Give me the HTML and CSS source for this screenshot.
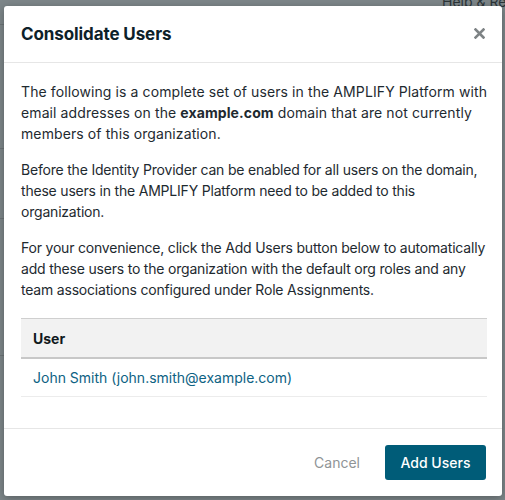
FILE: index.html
```html
<!DOCTYPE html>
<html lang="en">
<head>
<meta charset="utf-8">
<title>Consolidate Users</title>
<link rel="stylesheet" href="styles.css">
</head>
<body>
<div class="page">
  <div class="page-help">Help &amp; Re</div>
  <div class="page-line l1"></div>
  <div class="page-line l2"></div>
  <div class="page-line l3"></div>
  <div class="page-line l4"></div>
</div>
<div class="overlay">
  <div class="modal">
    <div class="modal-header">
      <h2 class="modal-title">Consolidate Users</h2>
      <svg class="close" width="11" height="11" viewBox="0 0 11 11" aria-label="Close"><path d="M1.5 1.5 L9.5 9.5 M9.5 1.5 L1.5 9.5" stroke="#7e8385" stroke-width="2.6" stroke-linecap="square" fill="none"/></svg>
    </div>
    <div class="modal-body">
      <p class="wide">The following is a complete set of users in the AMPLIFY Platform with<br>email addresses on the <strong>example.com</strong> domain that are not currently<br>members of this organization.</p>
      <p class="tight">Before the Identity Provider can be enabled for all users on the domain,<br>these users in the AMPLIFY Platform need to be added to this<br>organization.</p>
      <p class="tight">For your convenience, click the Add Users button below to automatically<br>add these users to the organization with the default org roles and any<br>team associations configured under Role Assignments.</p>
      <table class="users">
        <thead><tr><th>User</th></tr></thead>
        <tbody><tr><td><a href="#">John Smith (john.smith@example.com)</a></td></tr></tbody>
      </table>
    </div>
    <div class="modal-footer">
      <button class="btn-cancel">Cancel</button>
      <button class="btn-primary">Add Users</button>
    </div>
  </div>
</div>
</body>
</html>
```
FILE: styles.css
```css
html, body {
  margin: 0;
  padding: 0;
}
body {
  width: 505px;
  height: 500px;
  overflow: hidden;
  background: #7d8689;
  font-family: Inter, "Noto Sans", sans-serif;
  position: relative;
}
.page {
  position: absolute;
  inset: 0;
  overflow: hidden;
}
.page-help {
  position: absolute;
  left: 442px;
  top: -7px;
  font-size: 14px;
  color: #2c3538;
  white-space: nowrap;
}
.page-line {
  position: absolute;
  left: 0;
  width: 8px;
  height: 1px;
  background: #6c7477;
}
.l1 { top: 24px; }
.l2 { top: 148px; }
.l3 { top: 218px; }
.l4 { top: 355px; }
.overlay {
  position: absolute;
  inset: 0;
  padding: 6px 3px 4px 4px;
  box-sizing: border-box;
}
.modal {
  height: 490px;
  background: #fff;
  border-radius: 3px;
  box-shadow: 0 2px 8px rgba(0,0,0,0.3);
  display: flex;
  flex-direction: column;
}
.modal-header {
  height: 56px;
  border-bottom: 1px solid #e6e6e6;
  display: flex;
  align-items: center;
  justify-content: space-between;
  padding: 0 17px 0 17px;
}
.modal-title {
  margin: 0;
  font-size: 17px;
  font-weight: 700;
  color: #0d2129;
  letter-spacing: -0.1px;
}
.close {
  display: block;
  margin-top: -1px;
}
.modal-body {
  flex: 1;
  padding: 18px 4px 0 17px;
  color: #1e2a30;
  font-size: 14px;
  line-height: 21px;
}
.modal-body p {
  margin: 0 0 15px 0;
  white-space: nowrap;
}
.modal-body p.wide {
  letter-spacing: 0.1px;
}
.modal-body p.tight {
  letter-spacing: -0.2px;
}
.modal-body strong {
  font-weight: 700;
}
.users {
  width: 466px;
  border-collapse: collapse;
  margin-top: 18px;
  font-size: 14px;
}
.users th {
  text-align: left;
  background: #f2f2f2;
  border-top: 1px solid #cfcfcf;
  border-bottom: 2px solid #c8c8c8;
  padding: 9px 12px 8px 12px;
  height: 21px;
  font-weight: 700;
  color: #10191d;
}
.users td {
  padding: 8px 12px 8px 12px;
  border-bottom: 1px solid #ececec;
}
.users a {
  color: #0d6283;
  text-decoration: none;
}
.modal-footer {
  height: 67px;
  border-top: 1px solid #e6e6e6;
  display: flex;
  align-items: center;
  justify-content: flex-end;
  gap: 25px;
  padding: 0 16px 0 0;
}
.btn-cancel {
  background: none;
  border: none;
  font-family: inherit;
  font-size: 14px;
  color: #8f9496;
  padding: 0;
}
.btn-primary {
  background: #005c78;
  color: #fff;
  border: none;
  border-radius: 3px;
  font-family: inherit;
  font-size: 14px;
  font-weight: 500;
  width: 101px;
  height: 35px;
}
```
